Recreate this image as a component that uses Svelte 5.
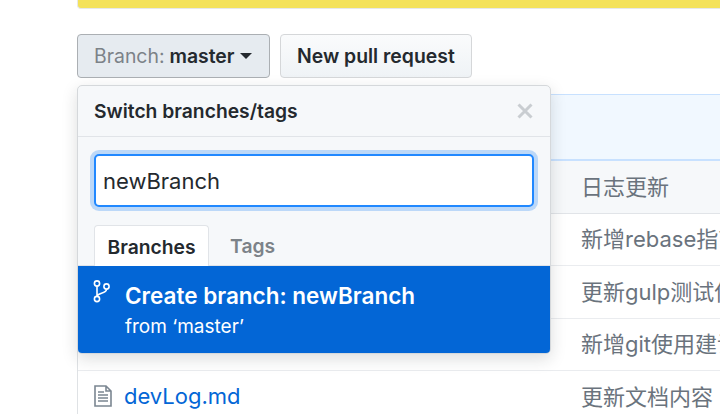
<script>
  const rows = [
    { name: '', message: '新增rebase指南文档内容' },
    { name: '', message: '更新gulp测试使用说明' },
    { name: '', message: '新增git使用建议文档' },
    { name: 'devLog.md', message: '更新文档内容' }
  ];
</script>

<div class="page">
  <div class="banner"></div>

  <div class="actions">
    <button class="btn open">
      <span class="muted">Branch:</span><strong>master</strong><span class="caret"></span>
    </button>
    <button class="btn">New pull request</button>
  </div>

  <div class="files">
    <div class="tease"></div>
    <div class="row head"><span class="message">日志更新</span></div>
    {#each rows as row}
      <div class="row">
        <svg class="file-icon" width="18" height="22" viewBox="0 0 18 22">
          <path d="M1 1h11l5 5v15H1z M12 1v5h5" fill="none" stroke="#7b8691" stroke-width="1.6" />
          <path d="M4 7h6M4 10h10M4 13h10M4 16h10" stroke="#7b8691" stroke-width="1.5" />
        </svg>
        {#if row.name}
          <a class="name" href="#top">{row.name}</a>
        {/if}
        <span class="message">{row.message}</span>
      </div>
    {/each}
  </div>

  <div class="menu">
    <div class="menu-head">
      <span>Switch branches/tags</span>
      <svg class="close" width="16" height="16" viewBox="0 0 16 16">
        <path d="M1.5 1.5l13 13M14.5 1.5l-13 13" stroke="#c9cdd1" stroke-width="3" />
      </svg>
    </div>
    <div class="filter">
      <input value="newBranch" />
    </div>
    <div class="tabs">
      <span class="tab active">Branches</span>
      <span class="tab">Tags</span>
    </div>
    <div class="create">
      <svg class="branch" width="17" height="23" viewBox="0 0 17 23">
        <g fill="none" stroke="#fff" stroke-width="1.6">
          <circle cx="4" cy="3.5" r="2.6" />
          <circle cx="4" cy="19" r="2.6" />
          <circle cx="13.5" cy="6.5" r="2.6" />
          <path d="M4 6.2v10M13.5 9.2c0 4.4-8.5 3.6-9.5 7" />
        </g>
      </svg>
      <div>
        <div class="create-title">Create branch: newBranch</div>
        <div class="create-from">from ‘master’</div>
      </div>
    </div>
  </div>
</div>

<style>
  :global(body) {
    margin: 0;
    background: #fff;
    overflow: hidden;
  }

  .page {
    position: relative;
    width: 720px;
    height: 414px;
    overflow: hidden;
    padding-left: 77px;
    box-sizing: border-box;
    font-family: "Inter", "Liberation Sans", "Noto Sans CJK SC", sans-serif;
    color: #24292e;
  }

  .banner {
    height: 8px;
    background: #f4e25b;
    border: 1px solid #e6e8ea;
    border-top: 0;
    border-right: 0;
    border-radius: 0 0 0 4px;
    margin-bottom: 25px;
  }

  .actions {
    display: flex;
    gap: 10px;
    height: 44px;
    margin-bottom: 16px;
  }

  .btn {
    font: inherit;
    font-size: 19.4px;
    font-weight: 600;
    color: #24292e;
    padding: 0 16px;
    border: 1.5px solid #d5d7d9;
    border-radius: 4px;
    background: linear-gradient(#fafbfc, #eff3f6);
  }

  .btn.open {
    width: 193px;
    display: flex;
    align-items: center;
    white-space: pre;
    background: #e6ebf0;
    border-color: #abafb3;
  }

  .muted {
    color: #7c8288;
    font-weight: 400;
    margin-right: 5px;
  }

  .btn strong {
    font-weight: 600;
  }

  .caret {
    margin-left: 5px;
    border: 6px solid transparent;
    border-top-color: #24292e;
    border-bottom: 0;
  }

  .files {
    border-left: 1.5px solid #dfe2e5;
    font-size: 22px;
    color: #6a737d;
  }

  .tease {
    height: 64px;
    background: #f1f8ff;
    border-top: 1px solid #c8e1ff;
    border-bottom: 2px solid #c8e1ff;
  }

  .row {
    display: flex;
    align-items: center;
    height: 52.5px;
    box-sizing: border-box;
    border-bottom: 1.5px solid #eaecef;
    padding: 0 0 2px 16px;
    white-space: nowrap;
  }

  .row.head {
    background: #f6f8fa;
    border-bottom-color: #e1e4e8;
  }

  .file-icon {
    flex: none;
    margin-right: 12px;
  }

  .name {
    color: #0366d6;
    text-decoration: none;
    font-size: 22px;
  }

  .message {
    position: absolute;
    left: 581px;
    padding-bottom: 2px;
  }

  .menu {
    position: absolute;
    left: 77px;
    top: 85px;
    width: 474px;
    height: 269px;
    box-sizing: border-box;
    background: #f6f8fa;
    border: 1.5px solid #d5d8db;
    border-radius: 5px;
    box-shadow: 0 5px 16px rgba(27, 31, 35, 0.15);
    display: flex;
    flex-direction: column;
    overflow: hidden;
  }

  .menu-head {
    display: flex;
    align-items: center;
    justify-content: space-between;
    height: 51px;
    flex: none;
    box-sizing: border-box;
    padding: 0 17px 0 16px;
    border-bottom: 1.5px solid #e1e4e8;
    font-size: 19.3px;
    font-weight: 600;
  }

  .filter {
    padding: 17px 16px 0;
    flex: none;
  }

  input {
    display: block;
    box-sizing: border-box;
    width: 440px;
    height: 53px;
    padding: 0 7px;
    font: inherit;
    font-size: 22px;
    color: #24292e;
    background: #fff;
    border: 2px solid #2188ff;
    border-radius: 5px;
    box-shadow: 0 0 0 4px #bcd8f8;
    outline: none;
  }

  .tabs {
    display: flex;
    flex: none;
    height: 41px;
    margin-top: 18px;
    padding-left: 16px;
    box-sizing: border-box;
    border-bottom: 1.5px solid #e1e4e8;
    font-size: 19.3px;
    font-weight: 600;
  }

  .tab {
    display: flex;
    align-items: center;
    padding: 2px 21px 0;
    color: #7c8288;
  }

  .tab.active {
    padding: 2px 12.5px 0;
    margin-bottom: -1.5px;
    color: #24292e;
    background: #fff;
    border: 1.5px solid #e1e4e8;
    border-bottom: 0;
    border-radius: 4px 4px 0 0;
  }

  .create {
    flex: 1;
    display: flex;
    gap: 15px;
    padding: 14px 0 0 15px;
    background: #0366d6;
    color: #fff;
  }

  .create-title {
    font-size: 22.5px;
    font-weight: 600;
    line-height: 30px;
    margin-top: 1px;
  }

  .create-from {
    font-size: 19px;
    line-height: 30px;
    margin-top: 1px;
  }
</style>
